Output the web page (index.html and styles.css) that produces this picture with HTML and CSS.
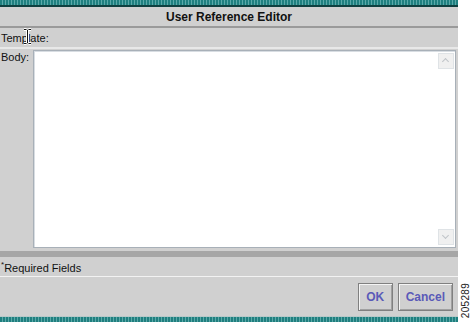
FILE: index.html
```html
<!DOCTYPE html>
<html lang="en">
<head>
  <meta charset="UTF-8" />
  <title>User Reference Editor</title>
  <link rel="stylesheet" href="styles.css">
</head>
<body>

  <div class="page">
    <div class="dialog">
      <div class="stripe"></div>
      <div class="title">User Reference Editor</div>

      <div class="row template-row">
        <span class="label">Template:</span>
        <!-- text cursor sitting over the field label -->
        <svg class="ibeam" width="9" height="17" viewBox="0 0 9 17">
          <path d="M1 1.5h2.5M5.5 1.5H8M4.5 2v13M1 15.5h2.5M5.5 15.5H8" stroke="#fff" stroke-width="3" fill="none"/>
          <path d="M1 1.5h2.5M5.5 1.5H8M4.5 2v13M1 15.5h2.5M5.5 15.5H8" stroke="#111" stroke-width="1" fill="none"/>
        </svg>
      </div>

      <div class="body-row">
        <span class="label body-label">Body:</span>
        <div class="textbox">
          <div class="text-area"></div>
          <div class="scroll">
            <div class="arrow up"></div>
            <div class="arrow down"></div>
          </div>
        </div>
      </div>

      <div class="divider"></div>

      <div class="row required-row">
        <span class="label"><sup>*</sup>Required Fields</span>
      </div>

      <div class="buttons">
        <button class="btn">OK</button>
        <button class="btn">Cancel</button>
      </div>

      <div class="stripe bottom"></div>
    </div>

    <div class="side">
      <span class="fig">205289</span>
    </div>
  </div>

</body>
</html>
```

FILE: styles.css
```css
html, body {
  margin: 0;
  padding: 0;
  background: #ffffff;
  font-family: 'Liberation Sans', Arial, sans-serif;
}

.page {
  display: flex;
  width: 472px;
  height: 325px;
}

.dialog {
  width: 458px;
  height: 322px;
  display: flex;
  flex-direction: column;
  background: #d0d0d0;
}

.stripe {
  height: 5px;
  background: repeating-linear-gradient(90deg, #1f7f7f 0 2px, #5aa8a8 2px 3px);
  border-bottom: 2px solid #0f3f3f;
}

.stripe.bottom {
  height: 5px;
  border-bottom: none;
  border-top: 1px solid #b8c8c8;
}

.title {
  height: 19px;
  line-height: 20px;
  text-align: center;
  font-weight: bold;
  font-size: 12px;
  color: #111;
  border-bottom: 2px solid #9a9a9a;
}

.row {
  display: flex;
  align-items: center;
  padding-left: 1px;
  font-size: 11px;
  color: #111;
}

.template-row {
  height: 19px;
  border-bottom: 2px solid #e8e8e8;
  position: relative;
}

.ibeam {
  position: absolute;
  left: 23px;
  top: 0;
}

.label {
  font-size: 11px;
  color: #111;
}

.body-row {
  display: flex;
  height: 202px;
}

.body-label {
  width: 32px;
  padding: 2px 0 0 1px;
}

.textbox {
  width: 421px;
  height: 196px;
  margin-top: 1px;
  background: #fff;
  border: 1px solid #a8b0b8;
  box-shadow: inset 1px 1px 0 #d8dde2;
  display: flex;
}

.text-area {
  flex: 1;
}

.scroll {
  width: 16px;
  display: flex;
  flex-direction: column;
  justify-content: space-between;
  padding: 2px 1px 2px 0;
}

.arrow {
  width: 14px;
  height: 14px;
  background: #f0f0f0;
  border: 1px solid #dfe3e6;
  position: relative;
}

.arrow::after {
  content: '';
  position: absolute;
  left: 4px;
  width: 4px;
  height: 4px;
  border-left: 1.5px solid #c0c4c8;
  border-top: 1.5px solid #c0c4c8;
}

.arrow.up::after {
  top: 5px;
  transform: rotate(45deg);
}

.arrow.down::after {
  top: 3px;
  transform: rotate(225deg);
}

.divider {
  height: 6px;
  background: #a6a6a6;
}

.required-row {
  height: 20px;
  border-bottom: 1px solid #f2f2f2;
  align-items: flex-end;
  padding-bottom: 2px;
  box-sizing: border-box;
}

.required-row sup {
  font-size: 8px;
  vertical-align: 5px;
}

.buttons {
  flex: 1;
  display: flex;
  justify-content: flex-end;
  align-items: center;
  gap: 5px;
  padding-right: 5px;
}

.btn {
  height: 28px;
  padding: 0 7px;
  min-width: 35px;
  font-family: 'Liberation Sans', Arial, sans-serif;
  font-weight: bold;
  font-size: 12px;
  color: #5a5ab8;
  background: #d0d0d0;
  border: 1px solid #808080;
  box-shadow: inset 1px 1px 0 #f4f4f4, inset -1px -1px 0 #a0a0a0;
}

.side {
  flex: 1;
  display: flex;
  align-items: flex-end;
  justify-content: center;
  padding-bottom: 7px;
}

.fig {
  writing-mode: vertical-rl;
  transform: rotate(180deg);
  font-size: 10px;
  color: #222;
  letter-spacing: 0.3px;
}
```
